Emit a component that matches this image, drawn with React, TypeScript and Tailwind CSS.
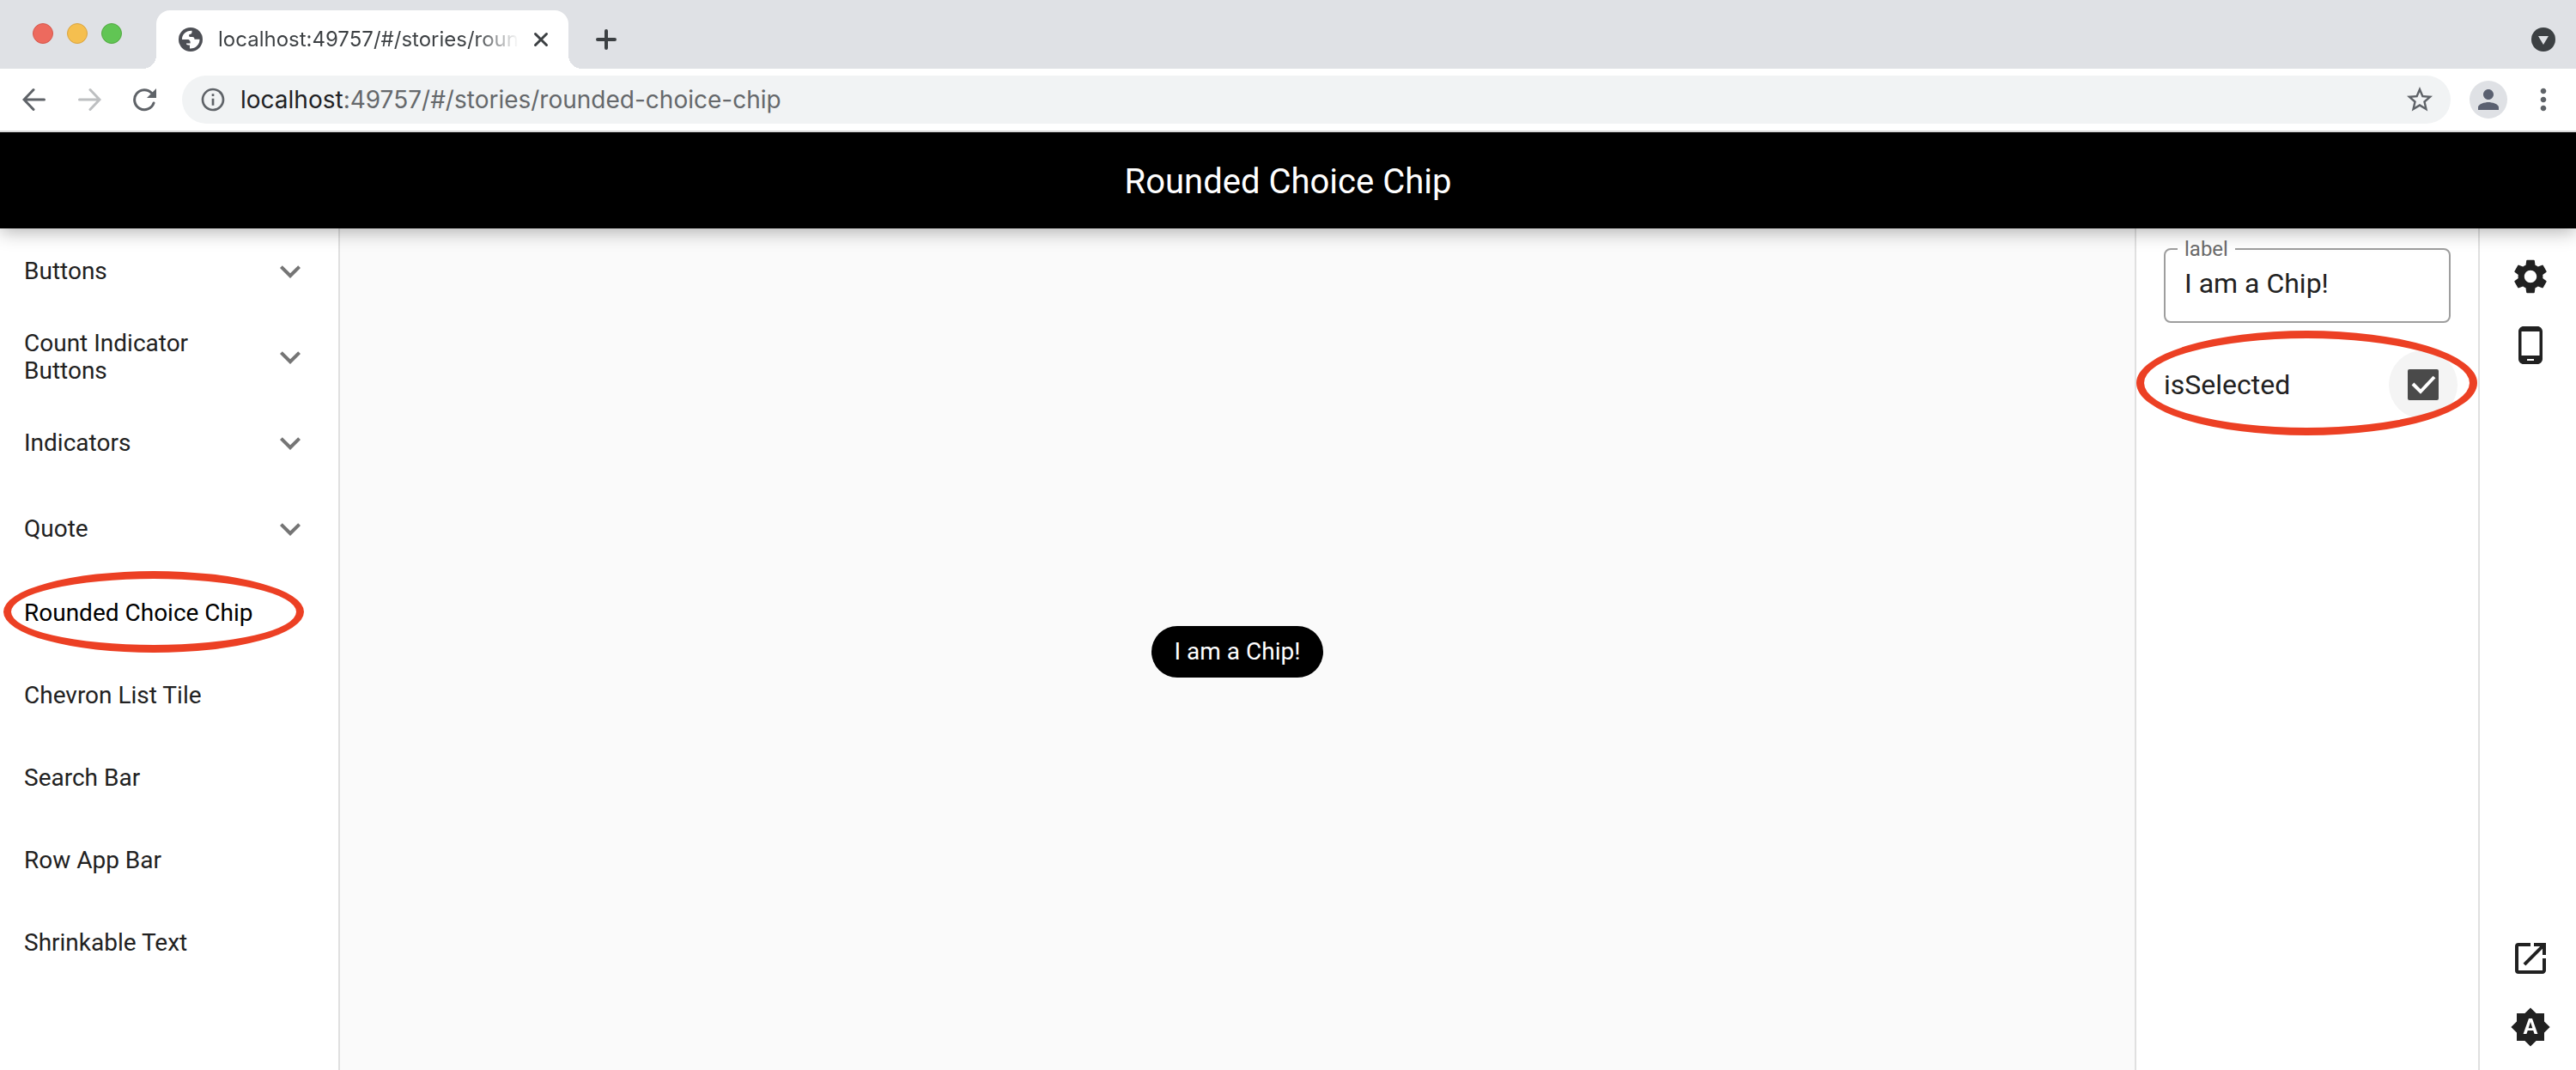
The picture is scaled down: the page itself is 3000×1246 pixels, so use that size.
import { useState } from "react";
import type { ReactNode } from "react";
import {
  MdBrightnessAuto,
  MdExpandMore,
  MdMoreVert,
  MdOpenInNew,
  MdOutlineInfo,
  MdPerson,
  MdPhoneAndroid,
  MdSettings,
  MdStarBorder,
} from "react-icons/md";

const groups = ["Buttons", "Count Indicator Buttons", "Indicators", "Quote"];
const stories = ["Rounded Choice Chip", "Chevron List Tile", "Search Bar", "Row App Bar", "Shrinkable Text"];

function IconButton({ label, className = "", children }: { label: string; className?: string; children?: ReactNode }) {
  return (
    <button type="button" aria-label={label} className={`flex shrink-0 items-center justify-center ${className}`}>
      {children}
    </button>
  );
}

function StrokeIcon({ d, className, width = 3 }: { d: string; className: string; width?: number }) {
  return (
    <svg viewBox="0 0 28 28" className={className} fill="none" stroke="currentColor" strokeWidth={width} strokeLinecap="round">
      <path d={d} />
    </svg>
  );
}

function GlobeIcon({ className }: { className: string }) {
  return (
    <svg viewBox="0 0 28 28" className={className}>
      <circle cx="14" cy="14" r="14" fill="#4d4f55" />
      <path
        d="M4 14C3.800 8 8.500 3.600 15.500 3.800V5.200C15.500 7 14.500 7.800 12.500 8C11.800 9.500 12 11 13.500 11H16C17.800 11 18.500 12 18.500 13.800H24.500C24.500 20 20 24.800 13 24.500V20.500H11.500C9.500 20.500 9 19.500 9 18.500H13.500C14.200 16.500 13 14.500 11.500 14Z"
        fill="#fff"
      />
    </svg>
  );
}

/** Red ring laid over the item it marks. */
function Ring({ className }: { className: string }) {
  return <span aria-hidden="true" className={`pointer-events-none absolute rounded-[50%] border-9 border-[#ec4024] ${className}`} />;
}

function TabStrip() {
  return (
    <div className="flex h-20 items-end bg-[#dfe1e5] pr-6">
      <div className="flex h-[78px] w-[182px] items-center gap-4 self-start pl-[38px]">
        <IconButton label="Close window" className="size-6 rounded-full border border-[#d5574c] bg-[#ed6a5e]" />
        <IconButton label="Minimize window" className="size-6 rounded-full border border-[#d9a441] bg-[#f5bf4f]" />
        <IconButton label="Zoom window" className="size-6 rounded-full border border-[#53a942] bg-[#61c554]" />
      </div>
      <div className="relative flex h-[68px] w-[480px] items-center rounded-t-2xl bg-white pl-[26px] pr-[18px]">
        <span className="absolute bottom-0 -left-4 size-4 bg-[radial-gradient(circle_at_0_0,#dfe1e5_16px,#fff_16px)]" />
        <span className="absolute bottom-0 -right-4 size-4 bg-[radial-gradient(circle_at_100%_0,#dfe1e5_16px,#fff_16px)]" />
        <GlobeIcon className="size-7 shrink-0" />
        <span className="ml-[18px] flex-1 overflow-hidden whitespace-nowrap bg-[linear-gradient(90deg,#3c4043_86%,transparent)] bg-clip-text font-[Inter,sans-serif] text-2xl text-transparent">
          localhost:49757/#/stories/rounded-choice-chip
        </span>
        <IconButton label="Close tab" className="ml-3 size-7 text-[#3c4043]">
          <StrokeIcon d="M7.500 7.500l13 13m0-13l-13 13" className="size-7" />
        </IconButton>
      </div>
      <IconButton label="New tab" className="mb-5 ml-[30px] size-7 text-[#3c4043]">
        <StrokeIcon d="M14 4v20M4 14h20" className="size-7" width={4} />
      </IconButton>
      <IconButton label="Search tabs" className="mb-5 ml-auto size-7 rounded-full bg-[#3c4043]">
        <svg viewBox="0 0 28 28" className="size-7" fill="#dfe1e5">
          <path d="M8 10h12l-6 10z" />
        </svg>
      </IconButton>
    </div>
  );
}

function Toolbar() {
  return (
    <div className="relative z-20 flex h-[74px] items-center border-b-2 border-[#d8d8d9] bg-white pr-5 pl-[26px]">
      <IconButton label="Back" className="size-7 text-[#5f6368]">
        <StrokeIcon d="M25.500 14H2.500M13 2.500L2 14l11 11.500" className="size-7" />
      </IconButton>
      <IconButton label="Forward" className="ml-9 size-7 text-[#bdbfc1]">
        <StrokeIcon d="M2.500 14h23M15 2.500L26 14 15 25.500" className="size-7" />
      </IconButton>
      <IconButton label="Reload" className="ml-9 size-7 text-[#5f6368]">
        <svg viewBox="0 0 28 28" className="size-7" fill="none" stroke="currentColor" strokeWidth="3" strokeLinecap="round">
          <path d="M22.500 6.300A11.500 11.500 0 1 0 25 18" />
          <path d="M28 1v11H17z" fill="currentColor" stroke="none" />
        </svg>
      </IconButton>
      <div className="ml-[30px] flex h-14 flex-1 items-center rounded-full bg-[#f1f3f4] pr-5 pl-5">
        <MdOutlineInfo className="size-8 shrink-0 text-[#5f6368]" />
        <a href="#/stories/rounded-choice-chip" className="ml-4 flex-1 font-[Inter,sans-serif] text-[28px] text-[#65686b]">
          <span className="text-[#202124]">localhost</span>:49757/#/stories/rounded-choice-chip
        </a>
        <IconButton label="Bookmark" className="size-8 text-[#5f6368]"><MdStarBorder className="size-9 shrink-0" /></IconButton>
      </div>
      <IconButton label="Profile" className="ml-[22px] size-11 rounded-full bg-[#dfe1e5] text-[#5a6070]"><MdPerson className="size-9" /></IconButton>
      <IconButton label="Menu" className="ml-6 size-9 text-[#5f6368]"><MdMoreVert className="size-10 shrink-0" /></IconButton>
    </div>
  );
}

function Sidebar({ current, onPick }: { current: string; onPick: (s: string) => void }) {
  return (
    <nav className="w-[396px] shrink-0 border-r-2 border-[#e0e0e0] bg-white text-[28px] leading-8 text-[#212121]">
      {groups.map((g) => (
        <button key={g} type="button" aria-expanded="false" className="flex h-[100px] w-full items-center justify-between pr-8 pl-7 text-left">
          <span className="w-60">{g}</span>
          <MdExpandMore className="size-12 shrink-0 text-[#757575]" />
        </button>
      ))}
      {stories.map((s) => (
        <button
          key={s}
          type="button"
          onClick={() => onPick(s)}
          className={`relative flex h-24 w-full items-center pl-7 text-left ${s === current ? "text-black" : ""}`}
        >
          {s}
          {s === "Rounded Choice Chip" && <Ring className="-top-px left-1 h-[95px] w-[350px]" />}
        </button>
      ))}
    </nav>
  );
}

export default function App() {
  const [label, setLabel] = useState("I am a Chip!");
  const [selected, setSelected] = useState(true);
  const [story, setStory] = useState("Rounded Choice Chip");

  return (
    <div className="flex min-h-screen flex-col overflow-hidden bg-white font-[Roboto,sans-serif]">
      <TabStrip />
      <Toolbar />
      <header className="relative z-10 flex h-28 items-center justify-center bg-black pt-1 text-white shadow-[0_4px_20px_rgba(0,0,0,0.3)]">
        <h1 className="text-[40px]">{story}</h1>
      </header>
      <div className="flex flex-1">
        <Sidebar current={story} onPick={setStory} />
        <main className="flex flex-1 items-center justify-center bg-[#fafafa] pt-1.5">
          <button
            type="button"
            aria-pressed={selected}
            onClick={() => setSelected(!selected)}
            className={`flex h-15 items-center rounded-full px-[27px] text-[28px] ${selected ? "bg-black text-white" : "bg-gray-200 text-black"}`}
          >
            {label}
          </button>
        </main>
        <aside className="w-[402px] shrink-0 border-x-2 border-[#e0e0e0] bg-white px-8 pt-2 text-[#212121]">
          <fieldset className="h-[102px] rounded-lg border-2 border-[#9e9e9e] pl-3.5">
            <legend className="px-2 text-2xl leading-8 text-[#6b6b6b]">
              <label htmlFor="chip-label">label</label>
            </legend>
            <input
              id="chip-label"
              value={label}
              onChange={(e) => setLabel(e.target.value)}
              className="w-full bg-transparent pl-2 text-[32px] leading-12 outline-none"
            />
          </fieldset>
          <div className="relative mt-8 flex h-20 items-center justify-between">
            <label htmlFor="is-selected" className="text-[32px]">isSelected</label>
            <span className="-mr-2 flex size-20 items-center justify-center rounded-full bg-[#f4f4f4]">
              <input
                id="is-selected"
                type="checkbox"
                checked={selected}
                onChange={(e) => setSelected(e.target.checked)}
                className="peer size-9 appearance-none rounded-xs border-4 border-[#4a4a4a] checked:bg-[#4a4a4a]"
              />
              <svg viewBox="0 0 36 36" className="pointer-events-none absolute size-9 opacity-0 peer-checked:opacity-100" fill="none" stroke="#fff" strokeWidth="4">
                <path d="M6 17l9 9L31 9" />
              </svg>
            </span>
            <Ring className="-top-[23px] -left-8 h-[122px] w-[397px]" />
          </div>
        </aside>
        <div className="flex w-[112px] shrink-0 flex-col items-center bg-white pt-8 pb-[26px] pl-1.5 text-[#212121]">
          <IconButton label="Knobs" className="size-12"><MdSettings className="size-12" /></IconButton>
          <IconButton label="Device" className="mt-8 size-12"><MdPhoneAndroid className="size-12" /></IconButton>
          <IconButton label="Open in new" className="mt-auto size-12"><MdOpenInNew className="size-12" /></IconButton>
          <IconButton label="Theme" className="mt-8 size-12"><MdBrightnessAuto className="size-12" /></IconButton>
        </div>
      </div>
    </div>
  );
}
